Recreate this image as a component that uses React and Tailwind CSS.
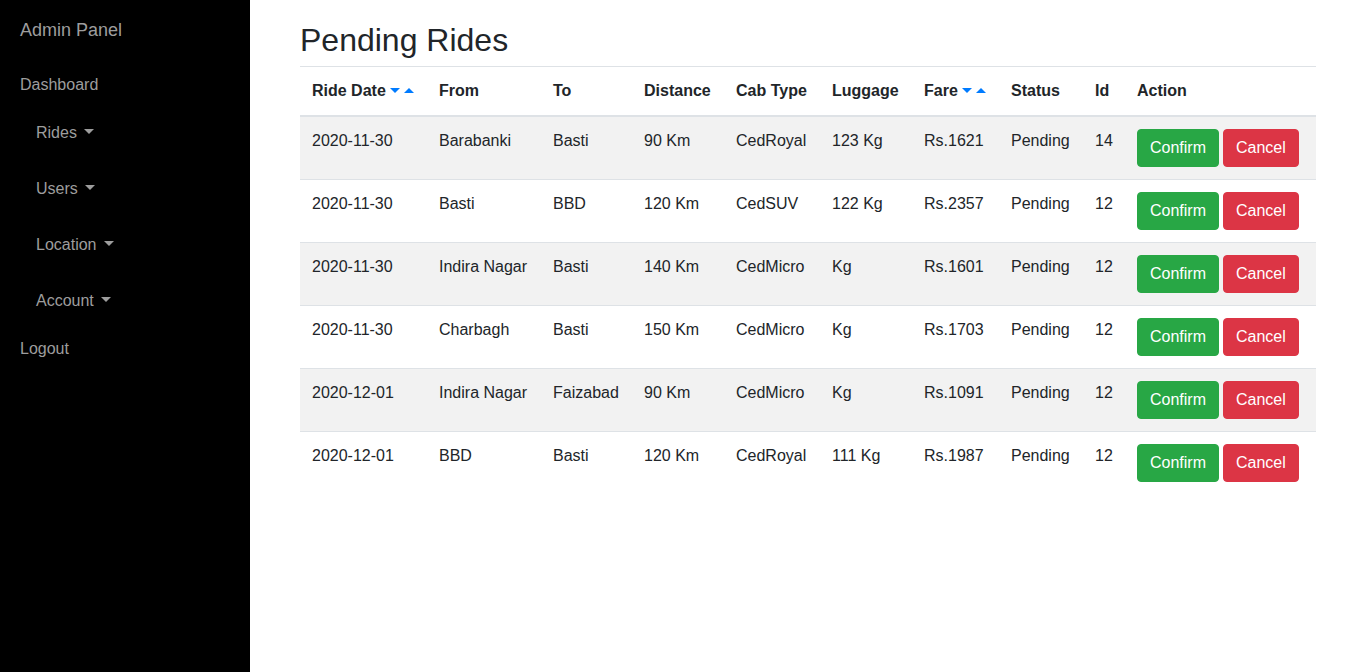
import React from "react";

const rides = [
  { date: "2020-11-30", from: "Barabanki", to: "Basti", distance: "90 Km", cab: "CedRoyal", luggage: "123 Kg", fare: "Rs.1621", status: "Pending", id: "14" },
  { date: "2020-11-30", from: "Basti", to: "BBD", distance: "120 Km", cab: "CedSUV", luggage: "122 Kg", fare: "Rs.2357", status: "Pending", id: "12" },
  { date: "2020-11-30", from: "Indira Nagar", to: "Basti", distance: "140 Km", cab: "CedMicro", luggage: "Kg", fare: "Rs.1601", status: "Pending", id: "12" },
  { date: "2020-11-30", from: "Charbagh", to: "Basti", distance: "150 Km", cab: "CedMicro", luggage: "Kg", fare: "Rs.1703", status: "Pending", id: "12" },
  { date: "2020-12-01", from: "Indira Nagar", to: "Faizabad", distance: "90 Km", cab: "CedMicro", luggage: "Kg", fare: "Rs.1091", status: "Pending", id: "12" },
  { date: "2020-12-01", from: "BBD", to: "Basti", distance: "120 Km", cab: "CedRoyal", luggage: "111 Kg", fare: "Rs.1987", status: "Pending", id: "12" },
];

function Caret() {
  return (
    <span className="inline-block ml-[7px] align-[4px] w-0 h-0 border-x-[5px] border-t-[5px] border-x-transparent border-t-current" />
  );
}

function SortArrows() {
  return (
    <span className="inline-flex items-center gap-[4px] ml-[4px] align-[3px]">
      <span className="inline-block w-0 h-0 border-x-[5px] border-t-[5px] border-x-transparent border-t-[#007bff]" />
      <span className="inline-block w-0 h-0 border-x-[5px] border-b-[5px] border-x-transparent border-b-[#007bff]" />
    </span>
  );
}

export default function App() {
  const menu = ["Rides", "Users", "Location", "Account"];

  return (
    <div className="flex min-h-screen bg-white text-[#212529]" style={{ fontFamily: '"Liberation Sans", Arial, sans-serif' }}>
      {/* Sidebar */}
      <aside className="w-[250px] shrink-0 bg-black px-5 text-[#9d9d9d]">
        <div className="pt-[17px] text-[18px] leading-[27px]">Admin Panel</div>
        <div className="mt-[29px] text-base leading-6">Dashboard</div>
        <ul className="mt-6 pl-4 flex flex-col gap-8">
          {menu.map((m) => (
            <li key={m} className="text-base leading-6">
              {m}
              <Caret />
            </li>
          ))}
        </ul>
        <div className="mt-6 text-base leading-6">Logout</div>
      </aside>

      {/* Main */}
      <main className="flex-1 px-[50px] pt-[21px]">
        <h2 className="text-[32px] leading-[38px] mb-[7px]">Pending Rides</h2>
        <table className="w-full table-fixed border-collapse text-base leading-6">
          <colgroup>
            <col className="w-[127px]" />
            <col className="w-[114px]" />
            <col className="w-[91px]" />
            <col className="w-[92px]" />
            <col className="w-[96px]" />
            <col className="w-[92px]" />
            <col className="w-[87px]" />
            <col className="w-[84px]" />
            <col className="w-[42px]" />
            <col className="w-[191px]" />
          </colgroup>
          <thead>
            <tr className="text-left">
              <th className="p-3 font-bold border-t border-b-2 border-[#dee2e6] whitespace-nowrap">
                Ride Date
                <SortArrows />
              </th>
              <th className="p-3 font-bold border-t border-b-2 border-[#dee2e6]">From</th>
              <th className="p-3 font-bold border-t border-b-2 border-[#dee2e6]">To</th>
              <th className="p-3 font-bold border-t border-b-2 border-[#dee2e6]">Distance</th>
              <th className="p-3 font-bold border-t border-b-2 border-[#dee2e6] whitespace-nowrap">Cab Type</th>
              <th className="p-3 font-bold border-t border-b-2 border-[#dee2e6]">Luggage</th>
              <th className="p-3 font-bold border-t border-b-2 border-[#dee2e6] whitespace-nowrap">
                Fare
                <SortArrows />
              </th>
              <th className="p-3 font-bold border-t border-b-2 border-[#dee2e6]">Status</th>
              <th className="p-3 font-bold border-t border-b-2 border-[#dee2e6]">Id</th>
              <th className="p-3 font-bold border-t border-b-2 border-[#dee2e6]">Action</th>
            </tr>
          </thead>
          <tbody>
            {rides.map((r, i) => (
              <tr key={i} className={i % 2 === 0 ? "bg-[#f2f2f2]" : "bg-white"}>
                <td className="p-3 align-top border-t border-[#dee2e6] whitespace-nowrap">{r.date}</td>
                <td className="p-3 align-top border-t border-[#dee2e6] whitespace-nowrap">{r.from}</td>
                <td className="p-3 align-top border-t border-[#dee2e6] whitespace-nowrap">{r.to}</td>
                <td className="p-3 align-top border-t border-[#dee2e6] whitespace-nowrap">{r.distance}</td>
                <td className="p-3 align-top border-t border-[#dee2e6] whitespace-nowrap">{r.cab}</td>
                <td className="p-3 align-top border-t border-[#dee2e6] whitespace-nowrap">{r.luggage}</td>
                <td className="p-3 align-top border-t border-[#dee2e6] whitespace-nowrap">{r.fare}</td>
                <td className="p-3 align-top border-t border-[#dee2e6] whitespace-nowrap">{r.status}</td>
                <td className="p-3 align-top border-t border-[#dee2e6] whitespace-nowrap">{r.id}</td>
                <td className="p-3 align-top border-t border-[#dee2e6] whitespace-nowrap">
                  <div className="flex gap-1">
                    <button className="px-3 py-1.5 leading-6 text-white bg-[#28a745] border border-[#28a745] rounded">
                      Confirm
                    </button>
                    <button className="px-3 py-1.5 leading-6 text-white bg-[#dc3545] border border-[#dc3545] rounded">
                      Cancel
                    </button>
                  </div>
                </td>
              </tr>
            ))}
          </tbody>
        </table>
      </main>
    </div>
  );
}
